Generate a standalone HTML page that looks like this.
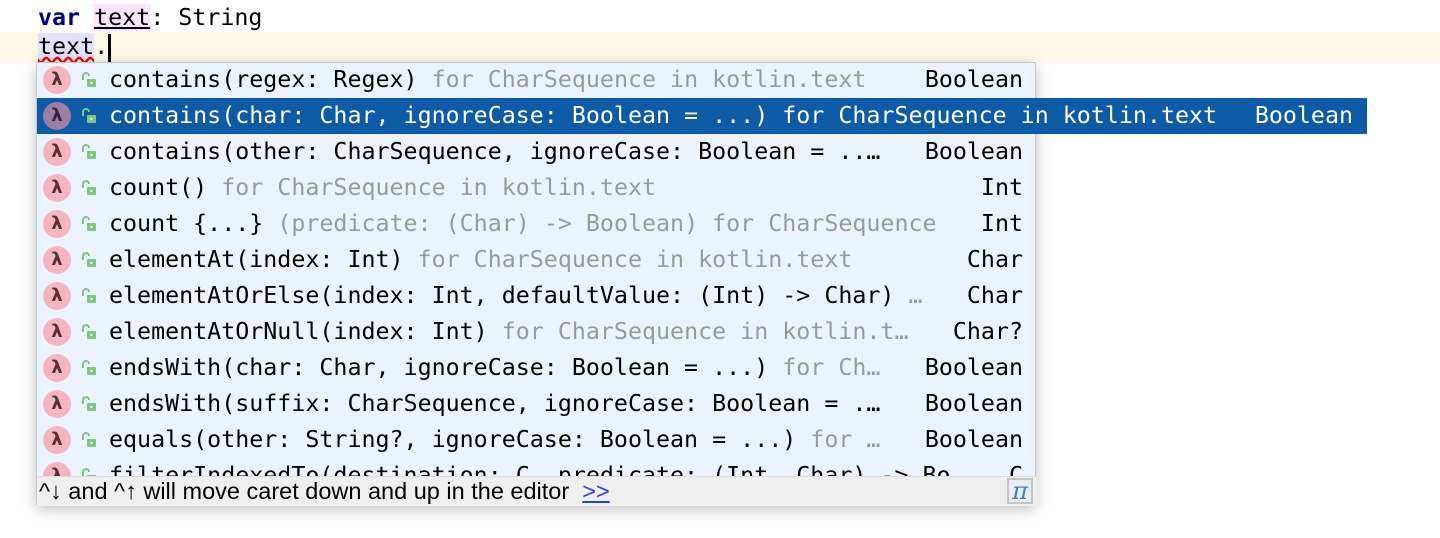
<!DOCTYPE html>
<html><head><style>
body{margin:0;width:1440px;height:538px;background:#fff;position:relative;overflow:hidden;font-family:"DejaVu Sans Mono","Liberation Mono",monospace;font-size:23.3px;}
.code{position:absolute;left:38px;white-space:pre;color:#000;line-height:30px}
.cur{position:absolute;left:0;top:32px;width:1440px;height:30px;background:#fdf9e6}
.pop{position:absolute;left:36px;top:62px;width:1000px;height:443px;background:#ebf4fe;box-shadow:0 4px 14px rgba(0,0,0,.25);border:1px solid #c8c8c8;box-sizing:border-box;overflow:visible;clip-path:inset(-20px -400px -20px -20px)}
.row{position:absolute;left:0;height:36px;width:1000px;white-space:pre;line-height:36px;color:#000}
.row .t{position:absolute;left:72px}
.row .r{position:absolute;right:14px}
.g{color:#9a9a9a}
.lam{position:absolute;left:6px;top:4px;width:28px;height:28px;border-radius:50%;background:#f5b6c1;color:#5a2f37;font-family:"DejaVu Sans",sans-serif;font-size:18px;font-weight:bold;line-height:28px;text-align:center}
.lock{position:absolute;left:44px;top:10px}
.sel{background:#0d5aa7;color:#fff;width:1330px}
.sel .lam{background:#9f7ea6;color:#3a2140}
.foot{position:absolute;left:0;top:413px;width:1000px;height:30px;background:#efefef;border-top:1px solid #ddd;font-family:"Liberation Sans",sans-serif;font-size:23.5px;line-height:28px;padding-left:2px;box-sizing:border-box;white-space:nowrap}
.foot a{color:#2244dd;text-decoration:underline}
.pi{position:absolute;right:4px;top:1px;width:26px;height:26px;border:2px solid #c4c4c4;box-sizing:border-box;color:#3b82c4;font-family:"DejaVu Serif",serif;font-style:italic;font-size:24px;line-height:22px;text-align:center;background:#e8eef4}
</style></head><body>
<div class="cur"></div>
<div class="code" style="top:3px"><b style="color:#000080">var</b> <span style="background:#fce3fc;text-decoration:underline">text</span>: String</div>
<div class="code" style="top:32px"><span style="background:#e2e2ff;text-decoration:underline wavy red">text</span>.<span style="display:inline-block;width:3px;height:28px;background:#000;vertical-align:middle"></span></div>
<div class="pop" id="p"></div>
<script>
const rows=[
['contains(regex: Regex)',' for CharSequence in kotlin.text','Boolean'],
['contains(char: Char, ignoreCase: Boolean = ...)',' for CharSequence in kotlin.text','Boolean'],
['contains(other: CharSequence, ignoreCase: Boolean = ..…','','Boolean'],
['count()',' for CharSequence in kotlin.text','Int'],
['count {...}',' (predicate: (Char) -> Boolean) for CharSequence','Int'],
['elementAt(index: Int)',' for CharSequence in kotlin.text','Char'],
['elementAtOrElse(index: Int, defaultValue: (Int) -> Char)',' …','Char'],
['elementAtOrNull(index: Int)',' for CharSequence in kotlin.t…','Char?'],
['endsWith(char: Char, ignoreCase: Boolean = ...)',' for Ch…','Boolean'],
['endsWith(suffix: CharSequence, ignoreCase: Boolean = .…','','Boolean'],
['equals(other: String?, ignoreCase: Boolean = ...)',' for …','Boolean'],
['filterIndexedTo(destination: C, predicate: (Int, Char) -> Bo…','','C']];
const lock='<svg class="lock" width="16" height="16" viewBox="0 0 16 16"><path d="M2 8V4a3 3 0 0 1 6 0" fill="none" stroke="#7cc87c" stroke-width="2"/><rect x="6" y="7" width="9" height="8" rx="1" fill="#7cc87c"/><rect x="9.5" y="10" width="2" height="2" fill="#fff"/></svg>';
let h='';
rows.forEach((r,i)=>{
 const s=i==1;
 h+=`<div class="row${s?' sel':''}" style="top:${i*36-1}px"><div class="lam">λ</div>${lock}<span class="t">${r[0]}<span class="${s?'':'g'}">${r[1]}</span></span><span class="r">${r[2]}</span></div>`;
});
h+='<div class="foot">^↓ and ^↑ will move caret down and up in the editor &nbsp;<a>&gt;&gt;</a><div class="pi">π</div></div>';
document.getElementById('p').innerHTML=h;
</script>
</body></html>
